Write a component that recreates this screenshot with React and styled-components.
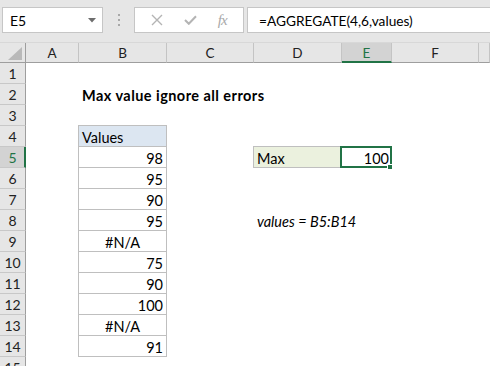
import React from "react";
import styled, { createGlobalStyle, css } from "styled-components";

const GlobalStyle = createGlobalStyle`
  html, body { margin: 0; padding: 0; background: #ffffff; }
  body { font-family: Lato, "Liberation Sans", sans-serif; overflow: hidden; }
  * { box-sizing: border-box; }
`;

const GREEN = "#217346";
const COLS = "26px 53px 88px 87px 88px 50px 87px 1fr";

const Page = styled.div`
  width: 490px;
  height: 366px;
  overflow: hidden;
  background: #ffffff;
  display: flex;
  flex-direction: column;
`;

const Toolbar = styled.div`
  height: 42px;
  flex: none;
  background: #e6e6e6;
  display: flex;
  align-items: flex-start;
  padding: 7px 0 0 2px;
`;

const Box = styled.div`
  height: 26px;
  background: #ffffff;
  border: 1px solid #c6c6c6;
  display: flex;
  align-items: center;
`;

const NameBox = styled(Box)`
  width: 101px;
  padding: 0 6px 0 7px;
  justify-content: space-between;
  font-size: 14px;
  color: #000;
`;

const Dots = styled.div`
  width: 31px;
  height: 26px;
  display: flex;
  flex-direction: column;
  align-items: center;
  justify-content: center;
  gap: 3px;
`;

const Dot = styled.span`
  width: 2px;
  height: 2px;
  background: #a8a8a8;
`;

const FxBox = styled(Box)`
  width: 110px;
  justify-content: space-around;
  padding: 0 6px;
`;

const FxText = styled.span`
  font-family: "Liberation Serif", serif;
  font-style: italic;
  font-size: 15px;
  color: #a9a9a9;
  letter-spacing: -1px;
`;

const FormulaBox = styled(Box)`
  flex: 1;
  margin-left: 3px;
  border-right: none;
  padding-left: 11px;
  font-size: 13.7px;
  color: #000;
`;

const HeaderRow = styled.div`
  display: grid;
  grid-template-columns: ${COLS};
  height: 21px;
  flex: none;
  background: #e6e6e6;
  border-top: 1px solid #d8d8d8;
`;

const Corner = styled.div`
  border-right: 1px solid #9e9e9e;
  border-bottom: 1px solid #9e9e9e;
  display: flex;
  align-items: flex-end;
  justify-content: flex-end;
  padding: 0 3px 2px 0;
`;

const ColHead = styled.div`
  border-right: 1px solid #c4c4c4;
  border-bottom: ${(p) => (p.$active ? `2px solid ${GREEN}` : "1px solid #9e9e9e")};
  background: ${(p) => (p.$active ? "#d3d3d3" : "transparent")};
  color: ${(p) => (p.$active ? GREEN : "#222")};
  font-size: 13.5px;
  display: flex;
  align-items: center;
  justify-content: center;
  padding-top: ${(p) => (p.$active ? "1px" : "0")};
`;

const Row = styled.div`
  display: grid;
  grid-template-columns: ${COLS};
  height: 21px;
  flex: none;
`;

const RowHead = styled.div`
  background: ${(p) => (p.$active ? "#d3d3d3" : "#e6e6e6")};
  color: ${(p) => (p.$active ? GREEN : "#222")};
  border-bottom: 1px solid #c8c8c8;
  border-right: ${(p) => (p.$active ? `2px solid ${GREEN}` : "1px solid #9e9e9e")};
  font-size: 14px;
  display: flex;
  align-items: center;
  justify-content: center;
  padding-left: ${(p) => (p.$active ? "1px" : "0")};
`;

const CB = "#bfbfbf";

const Cell = styled.div`
  position: relative;
  font-size: 14.5px;
  line-height: 17px;
  color: #000;
  white-space: nowrap;
  display: flex;
  align-items: flex-end;
  padding: 0 3px 0 3px;
  border-bottom: 1px solid transparent;
  justify-content: ${(p) =>
    p.$align === "right" ? "flex-end" : p.$align === "center" ? "center" : "flex-start"};
  font-weight: ${(p) => (p.$bold ? 700 : 400)};
  letter-spacing: ${(p) => (p.$bold ? "0.45px" : "normal")};
  font-style: ${(p) => (p.$italic ? "italic" : "normal")};
  background: ${(p) => p.$bg || "transparent"};
  ${(p) =>
    p.$boxed &&
    css`
      border-bottom: 1px solid ${CB};
      border-right: 1px solid ${CB};
      box-shadow: -1px 0 0 ${CB} ${p.$first ? `, 0 -1px 0 ${CB}, -1px -1px 0 ${CB}` : ""};
    `}
`;

const Selection = styled.div`
  position: absolute;
  top: -1px;
  left: -2px;
  right: 0;
  bottom: -1px;
  border: 2px solid ${GREEN};
  pointer-events: none;
`;

const Handle = styled.div`
  position: absolute;
  right: -3px;
  bottom: -4px;
  width: 6px;
  height: 6px;
  background: ${GREEN};
  border: 1px solid #ffffff;
`;

const data = {
  2: { B: { text: "Max value ignore all errors", bold: true } },
  4: { B: { text: "Values", boxed: true, first: true, bg: "#dce6f1" } },
  5: {
    B: { text: "98", boxed: true, align: "right" },
    D: { text: "Max", boxed: true, first: true, bg: "#ebf1de" },
    E: { text: "100", align: "right", selected: true },
  },
  6: { B: { text: "95", boxed: true, align: "right" } },
  7: { B: { text: "90", boxed: true, align: "right" } },
  8: {
    B: { text: "95", boxed: true, align: "right" },
    D: { text: "values = B5:B14", italic: true },
  },
  9: { B: { text: "#N/A", boxed: true, align: "center" } },
  10: { B: { text: "75", boxed: true, align: "right" } },
  11: { B: { text: "90", boxed: true, align: "right" } },
  12: { B: { text: "100", boxed: true, align: "right" } },
  13: { B: { text: "#N/A", boxed: true, align: "center" } },
  14: { B: { text: "91", boxed: true, align: "right" } },
};

const letters = ["A", "B", "C", "D", "E", "F", "G"];

export default function App() {
  const rows = Array.from({ length: 15 }, (_, i) => i + 1);
  return (
    <Page>
      <GlobalStyle />
      <Toolbar>
        <NameBox>
          <span>E5</span>
          <svg width="8" height="5" viewBox="0 0 8 5">
            <path d="M0 0 H8 L4 4.5 Z" fill="#6d6d6d" />
          </svg>
        </NameBox>
        <Dots>
          <Dot />
          <Dot />
          <Dot />
        </Dots>
        <FxBox>
          <svg width="12" height="12" viewBox="0 0 12 12">
            <path d="M1 1 L11 11 M11 1 L1 11" stroke="#b4b4b4" strokeWidth="1.4" fill="none" />
          </svg>
          <svg width="13" height="10" viewBox="0 0 13 10">
            <path d="M1 5 L4.8 8.8 L12 1.2" stroke="#b4b4b4" strokeWidth="2" fill="none" />
          </svg>
          <FxText>fx</FxText>
        </FxBox>
        <FormulaBox>=AGGREGATE(4,6,values)</FormulaBox>
      </Toolbar>
      <HeaderRow>
        <Corner>
          <svg width="14" height="13" viewBox="0 0 14 13">
            <path d="M14 0 V13 H0 Z" fill="#b9b9b9" />
          </svg>
        </Corner>
        {letters.map((l) => (
          <ColHead key={l} $active={l === "E"}>
            {l === "G" ? "" : l}
          </ColHead>
        ))}
      </HeaderRow>
      {rows.map((r) => (
        <Row key={r}>
          <RowHead $active={r === 5}>{r}</RowHead>
          {letters.map((l) => {
            const c = (data[r] && data[r][l]) || null;
            if (!c) return <Cell key={l} />;
            return (
              <Cell
                key={l}
                $boxed={c.boxed}
                $first={c.first}
                $bg={c.bg}
                $align={c.align}
                $bold={c.bold}
                $italic={c.italic}
              >
                {c.text}
                {c.selected && (
                  <Selection>
                    <Handle />
                  </Selection>
                )}
              </Cell>
            );
          })}
        </Row>
      ))}
    </Page>
  );
}
